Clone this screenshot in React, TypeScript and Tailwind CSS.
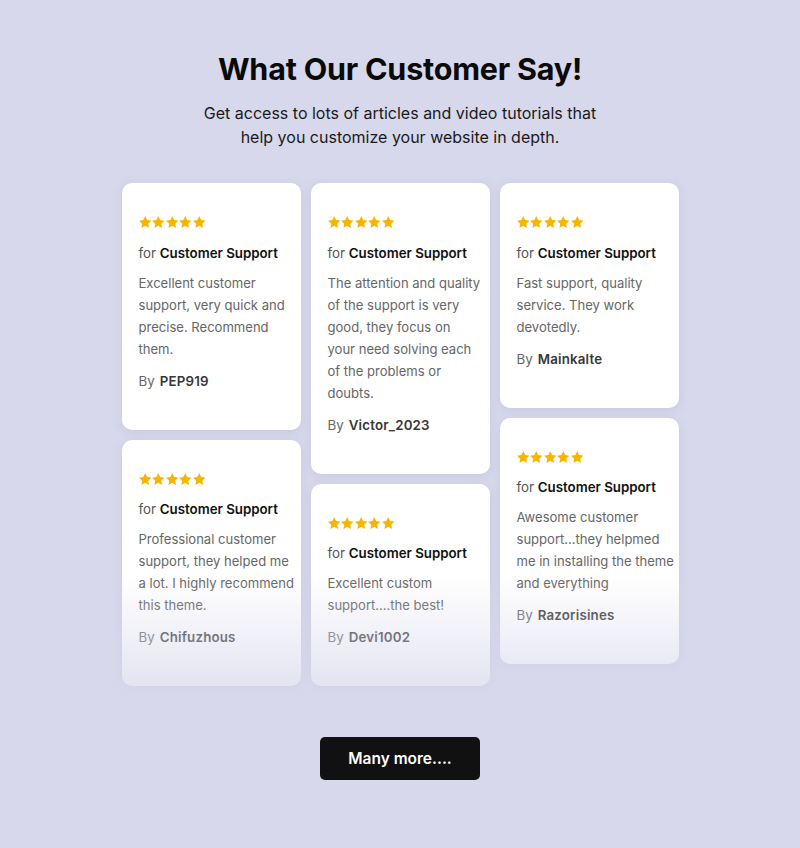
type Review = {
  lines: string[];
  author: string;
};

const columns: Review[][] = [
  [
    { lines: ["Excellent customer", "support, very quick and", "precise. Recommend", "them."], author: "PEP919" },
    {
      lines: ["Professional customer", "support, they helped me", "a lot. I highly recommend", "this theme."],
      author: "Chifuzhous",
    },
  ],
  [
    {
      lines: [
        "The attention and quality",
        "of the support is very",
        "good, they focus on",
        "your need solving each",
        "of the problems or",
        "doubts.",
      ],
      author: "Victor_2023",
    },
    { lines: ["Excellent custom", "support....the best!"], author: "Devi1002" },
  ],
  [
    { lines: ["Fast support, quality", "service. They work", "devotedly."], author: "Mainkalte" },
    {
      lines: ["Awesome customer", "support...they helpmed", "me in installing the theme", "and everything"],
      author: "Razorisines",
    },
  ],
];

function Stars() {
  return (
    <div className="flex gap-[1px]">
      {[0, 1, 2, 3, 4].map((i) => (
        <svg key={i} viewBox="1.6 1.6 20.8 20.8" className="h-[12.5px] w-[12.5px]">
          <path
            d="M12 1.8l3.1 6.6 7.2.9-5.3 5 1.4 7.1L12 17.9l-6.4 3.5 1.4-7.1-5.3-5 7.2-.9z"
            fill="#f7b500"
          />
        </svg>
      ))}
    </div>
  );
}

function ReviewCard({ review }: { review: Review }) {
  return (
    <div className="rounded-[10px] bg-white pb-[39px] pl-[17px] pr-[2px] pt-[33px] shadow-[0_2px_10px_rgba(120,120,170,0.18)]">
      <Stars />
      <p className="mt-[14px] text-[13.3px] leading-5 text-[#555]">
        for <span className="font-semibold text-[#111]">Customer Support</span>
      </p>
      <p className="mt-[9px] text-[13.05px] leading-[22px] text-[#666]">
        {review.lines.map((l) => (
          <span key={l} className="block whitespace-nowrap">
            {l}
          </span>
        ))}
      </p>
      <p className="mt-[11px] flex items-center gap-[5px] text-[13.3px] leading-5 text-[#666]">
        By
        <span className="font-semibold tracking-[0.2px] text-[#222] opacity-90">{review.author}</span>
      </p>
    </div>
  );
}

export default function App() {
  return (
    <div
      className="min-h-[848px] bg-[#d8d8ec] pt-[49px]"
      style={{ fontFamily: "Inter, 'Noto Sans', sans-serif" }}
    >
      <div className="flex flex-col items-center">
        <h1 className="text-[30.5px] font-bold leading-10 tracking-[-0.2px] text-[#0a0a0a]">
          What Our Customer Say!
        </h1>
        <p className="mt-[12px] w-[420px] text-center text-[16px] leading-6 text-[#1a1a1a]">
          Get access to lots of articles and video tutorials that help you customize your website in depth.
        </p>

        <div className="relative mt-[34px] flex items-start gap-[10px]">
          {columns.map((col, ci) => (
            <div key={ci} className="flex w-[179px] flex-col gap-[10px]">
              {col.map((r) => (
                <ReviewCard key={r.author} review={r} />
              ))}
            </div>
          ))}
          <div className="pointer-events-none absolute inset-x-[-10px] bottom-[-10px] h-[120px] bg-gradient-to-b from-[#d8d8ec]/0 to-[#d8d8ec]/75" />
        </div>

        <button className="mt-[51px] h-[43px] w-[160px] rounded-[5px] bg-[#111] text-[15.5px] font-semibold text-white">
          Many more....
        </button>
      </div>
    </div>
  );
}
